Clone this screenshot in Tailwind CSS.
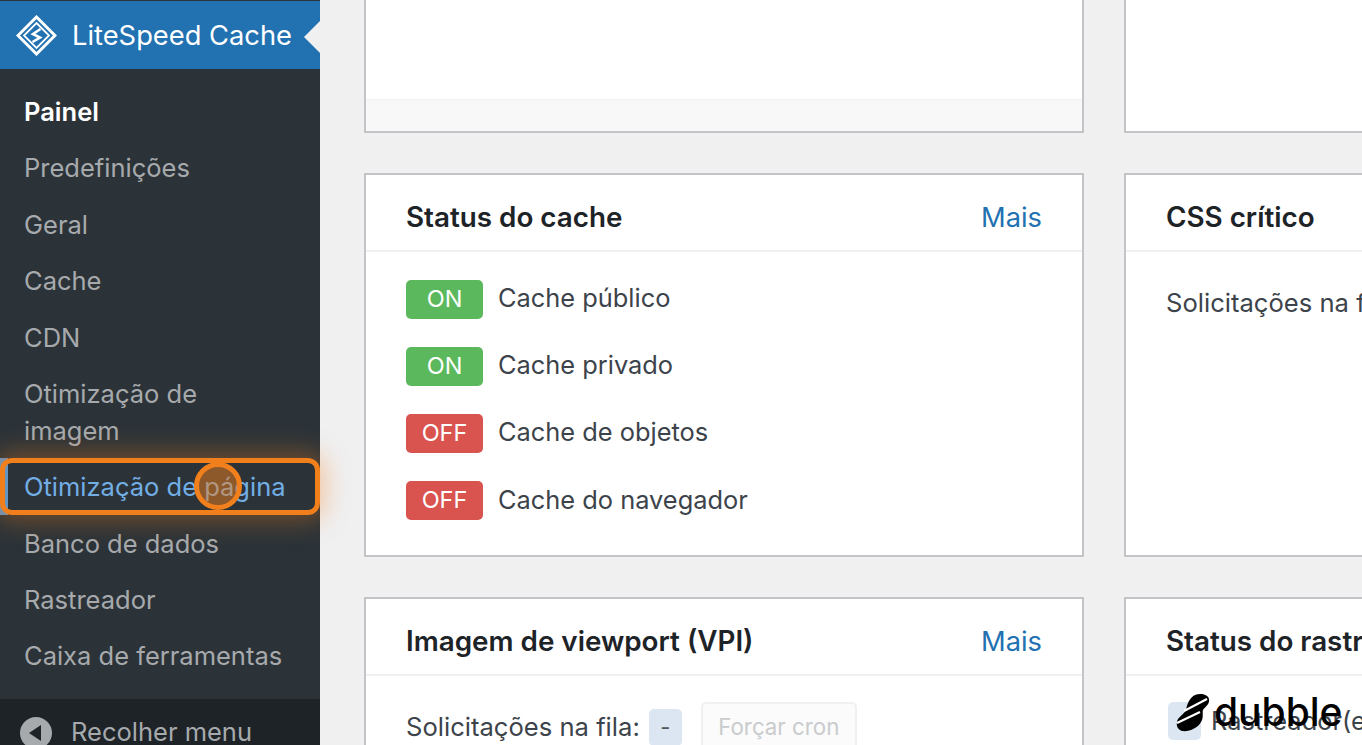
<!DOCTYPE html>
<html lang="pt-BR">
<head>
    <meta charset="UTF-8">
    <title>LiteSpeed Cache</title>
    <script src="https://cdn.jsdelivr.net/npm/@tailwindcss/browser@4"></script>
</head>
<body class="relative w-[1362px] h-[745px] overflow-hidden flex bg-[#f0f0f1] font-['Inter','Liberation_Sans',sans-serif] text-[#3c434a]">

    <!-- Sidebar -->
    <aside class="w-[320px] h-[745px] shrink-0 flex flex-col bg-[#2c3338] text-[25.5px] text-[#a7aaad]">
        <div class="h-[68px] mt-px shrink-0 flex items-center gap-[15px] pl-[16px] bg-[#2271b1] text-white text-[27.3px] relative">
            <svg class="w-[41px] h-[41px]" viewBox="0 0 41 41" fill="none" stroke="white">
                <path d="M20.5 2 39 20.5 20.5 39 2 20.5Z" stroke-width="3"/>
                <path d="M20.5 8 33 20.5 20.5 33 8 20.5Z" stroke-width="1.8"/>
                <path d="M24.5 14 17 19 24 22.5 16.5 27" stroke-width="2.6"/>
            </svg>
            <span class="pt-[2px]">LiteSpeed Cache</span>
            <div class="absolute right-0 top-[20px] w-0 h-0 border-y-[16px] border-y-transparent border-r-[16px] border-r-[#f0f0f1]"></div>
        </div>
        <nav class="flex flex-col pt-[24px] px-[24px] leading-[37px] flex-1">
            <a class="font-semibold text-white h-[37px] mb-[19.4px]">Painel</a>
            <a class="h-[37px] mb-[19.4px]">Predefinições</a>
            <a class="h-[37px] mb-[19.4px]">Geral</a>
            <a class="h-[37px] mb-[19.4px]">Cache</a>
            <a class="h-[37px] mb-[19.4px]">CDN</a>
            <a class="h-[74px] mb-[19.4px]">Otimização de<br>imagem</a>
            <a class="h-[37px] mb-[19.4px] text-[#72aee6] whitespace-nowrap">Otimização de página</a>
            <a class="h-[37px] mb-[19.4px]">Banco de dados</a>
            <a class="h-[37px] mb-[19.4px]">Rastreador</a>
            <a class="h-[37px] -mt-[1px]">Caixa de ferramentas</a>
        </nav>
        <div class="h-[46px] shrink-0 flex items-start gap-[19px] pl-[20px] pt-[17px] bg-[#1d2327]">
            <svg class="w-[32px] h-[32px] shrink-0 mt-[1px]" viewBox="0 0 32 32">
                <circle cx="16" cy="16" r="16" fill="#a7aaad"/>
                <path d="M21 8 9 16 21 24Z" fill="#1d2327"/>
            </svg>
            <span class="leading-[32px]">Recolher menu</span>
        </div>
    </aside>

    <!-- Cards -->
    <main class="flex-1 min-w-0 pl-[44px] flex flex-col gap-[40px]">
        <div class="grid grid-cols-[720px_720px] gap-x-[40px] shrink-0">
            <div class="h-[133px] bg-white border-x-2 border-b-2 border-[#c3c4c7] flex flex-col justify-end">
                <div class="h-[32px] bg-[#f8f8f8] border-t border-[#f0f0f1]"></div>
            </div>
            <div class="h-[133px] bg-white border-x-2 border-b-2 border-[#c3c4c7]"></div>
        </div>

        <div class="grid grid-cols-[720px_720px] gap-x-[40px] shrink-0">
            <section class="h-[384px] bg-white border-2 border-[#c3c4c7]">
                <header class="h-[77px] pt-[10px] px-[40px] flex items-center justify-between border-b-2 border-[#f0f0f1]">
                    <h2 class="text-[27.8px] font-semibold text-[#1d2327]">Status do cache</h2>
                    <a class="text-[27.3px] text-[#2271b1] pt-[2px]">Mais</a>
                </header>
                <ul class="pt-[28px] px-[40px] flex flex-col gap-[29px] text-[25.4px]">
                    <li class="h-[38px] flex items-center gap-[15px]">
                        <span class="w-[77px] h-[39px] rounded-[5px] bg-[#5cb85c] text-white text-[23.5px] flex items-center justify-center">ON</span>
                        <span class="-mt-[2px]">Cache público</span>
                    </li>
                    <li class="h-[38px] flex items-center gap-[15px]">
                        <span class="w-[77px] h-[39px] rounded-[5px] bg-[#5cb85c] text-white text-[23.5px] flex items-center justify-center">ON</span>
                        <span class="-mt-[2px]">Cache privado</span>
                    </li>
                    <li class="h-[38px] flex items-center gap-[15px]">
                        <span class="w-[77px] h-[39px] rounded-[5px] bg-[#d9534f] text-white text-[23.5px] flex items-center justify-center">OFF</span>
                        <span class="-mt-[2px]">Cache de objetos</span>
                    </li>
                    <li class="h-[38px] flex items-center gap-[15px]">
                        <span class="w-[77px] h-[39px] rounded-[5px] bg-[#d9534f] text-white text-[23.5px] flex items-center justify-center">OFF</span>
                        <span>Cache do navegador</span>
                    </li>
                </ul>
            </section>
            <section class="h-[384px] bg-white border-2 border-[#c3c4c7]">
                <header class="h-[77px] pt-[10px] px-[40px] flex items-center border-b-2 border-[#f0f0f1]">
                    <h2 class="text-[27.8px] font-semibold text-[#1d2327]">CSS crítico</h2>
                </header>
                <p class="pt-[32px] px-[40px] text-[25.6px] whitespace-nowrap">Solicitações na fila: -</p>
            </section>
        </div>

        <div class="grid grid-cols-[720px_720px] gap-x-[40px] shrink-0">
            <section class="h-[200px] bg-white border-2 border-[#c3c4c7]">
                <header class="h-[77px] pt-[10px] px-[40px] flex items-center justify-between border-b-2 border-[#f0f0f1]">
                    <h2 class="text-[27.8px] font-semibold text-[#1d2327]">Imagem de viewport (VPI)</h2>
                    <a class="text-[27.3px] text-[#2271b1] pt-[2px]">Mais</a>
                </header>
                <div class="pt-[26px] px-[40px] flex items-center text-[25.6px]">
                    <span>Solicitações na fila:</span>
                    <span class="ml-[9px] w-[33px] h-[37px] rounded-[5px] bg-[#dbe6f2] flex items-center justify-center text-[#50575e] text-[22px]">-</span>
                    <button class="ml-[19px] w-[156px] h-[50px] rounded-[5px] border-2 border-[#f0f0f1] bg-[#fbfbfb] text-[#c9cbcd] text-[22.3px]">Forçar cron</button>
                </div>
            </section>
            <section class="h-[200px] bg-white border-2 border-[#c3c4c7]">
                <header class="h-[77px] pt-[10px] px-[40px] flex items-center border-b-2 border-[#f0f0f1]">
                    <h2 class="text-[27.8px] font-semibold text-[#1d2327] whitespace-nowrap">Status do rastreador</h2>
                </header>
                <div class="pt-[26px] pl-[42px] flex items-center gap-[10px] text-[25.4px] whitespace-nowrap">
                    <span class="w-[33px] h-[38px] rounded-[5px] bg-[#dbe6f2] shrink-0"></span>
                    <span>Rastreador(es)</span>
                </div>
            </section>
        </div>
    </main>

    <!-- Highlight overlay -->
    <div class="absolute left-0 top-[458px] w-[8px] h-[57px] bg-[#72aee6]/80"></div>
    <div class="absolute left-0 top-[458px] w-[320px] h-[57px] rounded-[12px] border-[5px] border-[#f07f1c] shadow-[0_0_24px_6px_rgba(240,127,28,0.35)]"></div>
    <div class="absolute left-[194px] top-[462px] w-[48px] h-[48px] rounded-full border-[5px] border-[#f07f1c] bg-[#f07f1c]/50"></div>

    <!-- Dubble watermark -->
    <div class="absolute left-[1176px] top-[692px] flex items-center gap-[4px] text-black">
        <svg class="w-[34px] h-[40px]" viewBox="0 0 34 40">
            <path d="M19 3C24 1 32 2 33 7 34 12 29 15 27 18 26 21 28 25 25 30 22 36 13 40 6 39 0 37 0 31 2 27 5 23 8 22 10 18 11 13 13 6 19 3Z" fill="black"/>
            <path d="M8 19 31 7" stroke="white" stroke-width="2.2" fill="none"/>
            <path d="M1 31 24 20" stroke="white" stroke-width="2.2" fill="none"/>
        </svg>
        <span class="font-medium text-[39px] leading-[40px]">dubble</span>
    </div>
</body>
</html>
